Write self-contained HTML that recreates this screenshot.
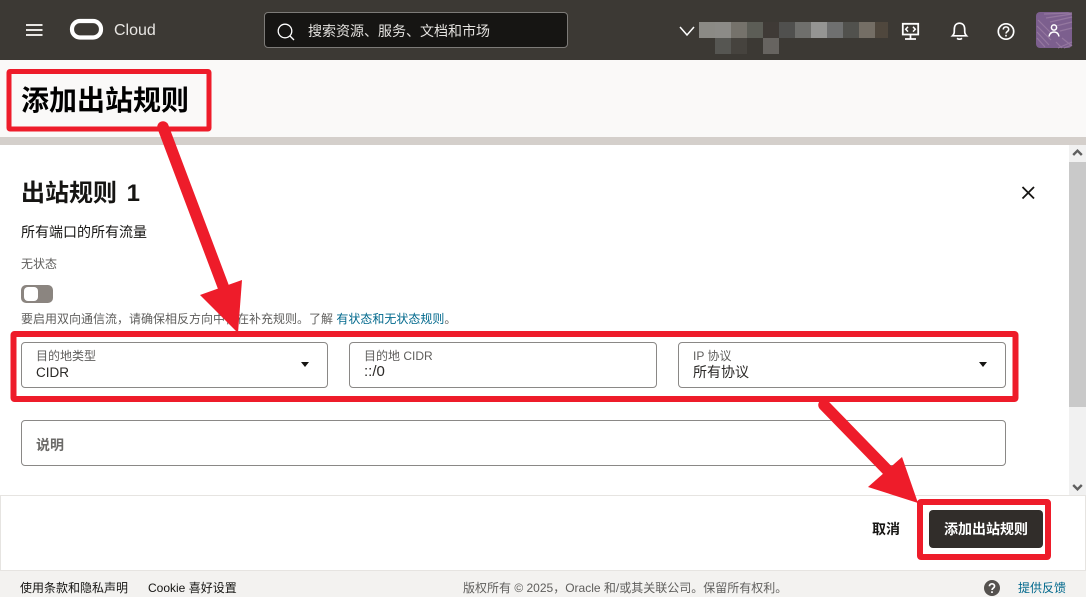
<!DOCTYPE html>
<html lang="zh"><head><meta charset="utf-8"><title>添加出站规则</title>
<style>
html,body{margin:0;padding:0;width:1086px;height:597px;overflow:hidden;background:#fff;font-family:"Liberation Sans","Noto Sans CJK SC",sans-serif;color:#161513}
div,span,a{position:absolute;white-space:nowrap}
.fld{background:#fff;border:1px solid #8a8886;border-radius:4px;box-sizing:border-box;height:46px}
.lb{font-size:12px;line-height:16px;color:#5f5e5c}
.val{font-size:14px;line-height:18px;color:#2b2927}
svg{position:absolute;overflow:visible}
</style></head><body>
<div style="left:0;top:0;width:1086px;height:60px;background:#3c3934"></div>
<div style="left:264px;top:12px;width:304px;height:36px;box-sizing:border-box;background:#161513;border:1px solid #7d7b78;border-radius:4px"></div>
<svg style="left:0;top:0" width="1086" height="60" fill="none" stroke="#fff">
<path d="M26 25h16.500M26 30h16.500M26 35h16.500" stroke="#e8e6e3" stroke-width="2"/>
<rect x="72" y="21" width="29" height="16.500" rx="8" stroke-width="4.200"/>
<circle cx="285" cy="31" r="6.800" stroke-width="1.300"/><path d="M290 36l4 4" stroke-width="1.300"/>
<path d="M680 27l7 8 7-8" stroke-width="1.500"/>
<path d="M902.800 23.800h15.400v10.700h-15.400z" stroke-width="1.800"/><path d="M910.500 34.500v4M905 39h11" stroke-width="1.700"/><path d="M908 26.800l-2.300 2.400 2.300 2.400M913 26.800l2.300 2.400-2.300 2.400" stroke-width="1.500"/>
<path d="M952.500 35.800c2-2 1.800-3.800 1.800-6.300 0-4 2-6.300 5.200-6.300s5.200 2.300 5.200 6.300c0 2.500-.2 4.300 1.800 6.300z" stroke-width="1.700"/><path d="M957 38.300c1.500 1.200 3.500 1.200 5 0" stroke-width="1.700"/>
<circle cx="1006" cy="31.500" r="7.700" stroke-width="1.700"/><path d="M1003.300 29.500c0-3.500 5.400-3.500 5.400 0 0 2-2.700 2-2.700 4" stroke-width="1.600"/><path d="M1006 34.800v1.700" stroke-width="1.600"/>
</svg>
<div style="left:114px;top:21px;font-size:16px;line-height:20px;color:#e8e6e3">Cloud</div>
<div style="left:308px;top:22px;font-size:14px;line-height:18px;color:#e4e2df">搜索资源、服务、文档和市场</div>
<svg style="left:699px;top:22px" width="190" height="32" shape-rendering="crispEdges">
<rect x="0" y="0" width="16" height="16" fill="#8b8a85"/><rect x="16" y="0" width="16" height="16" fill="#8c8b87"/><rect x="32" y="0" width="16" height="16" fill="#75726b"/><rect x="48" y="0" width="16" height="16" fill="#5c5d56"/><rect x="64" y="0" width="16" height="16" fill="#3f3a36"/><rect x="80" y="0" width="16" height="16" fill="#50504e"/><rect x="96" y="0" width="16" height="16" fill="#6f6f6c"/><rect x="112" y="0" width="16" height="16" fill="#959593"/><rect x="128" y="0" width="16" height="16" fill="#6f7070"/><rect x="144" y="0" width="16" height="16" fill="#51514d"/><rect x="160" y="0" width="16" height="16" fill="#746e65"/><rect x="176" y="0" width="13" height="16" fill="#4f473d"/>
<rect x="16" y="16" width="16" height="16" fill="#565652"/><rect x="32" y="16" width="16" height="16" fill="#46433e"/><rect x="64" y="16" width="16" height="16" fill="#676460"/>
</svg>
<svg style="left:1036px;top:12px" width="36" height="36" fill="none">
<rect width="36" height="36" rx="4" fill="#7c5f8e"/>
<path d="M8 2l28 -1M10 6l26-4M14 10l22-5M20 14l16-4M24 19l12-3M2 8l14 14M1 14l14 14M1 20l12 13M1 26l8 9M22 36l14-6M28 36l8-3M26 26l10 8M20 30l6 6" stroke="#94779f" stroke-width="1.200"/>
<circle cx="18" cy="15.500" r="2.600" stroke="#fff" stroke-width="1.500"/><path d="M13 24.500c.5-3 2.300-4.500 5-4.500s4.500 1.500 5 4.500" stroke="#fff" stroke-width="1.500"/>
</svg>

<div style="left:0;top:60px;width:1086px;height:77px;background:#faf9f8"></div>
<div style="left:0;top:137px;width:1086px;height:8px;background:#d4cfcb"></div>
<div style="left:21px;top:81px;font-size:28px;line-height:40px;font-weight:700;color:#000;letter-spacing:0">添加出站规则</div>

<div style="left:21px;top:176px;font-size:24px;line-height:36px;font-weight:700;word-spacing:3px">出站规则 1</div>
<svg style="left:1021px;top:185px" width="15" height="15" fill="none" stroke="#161513" stroke-width="1.800"><path d="M1.500 2l11.500 11.500M13 2L1.500 13.500"/></svg>
<div style="left:21px;top:222px;font-size:14px;line-height:20px">所有端口的所有流量</div>
<div style="left:21px;top:255px;font-size:12px;line-height:18px;color:#5f5e5c">无状态</div>
<div style="left:21px;top:285px;width:32px;height:18px;border-radius:5px;background:#8b8580"></div>
<div style="left:24px;top:287px;width:14px;height:14px;border-radius:4px;background:#fff"></div>
<div style="left:21px;top:310px;font-size:12px;line-height:18px;color:#5f5e5c">要启用双向通信流，请确保相反方向中存在补充规则。了解 <span style="position:static;color:#00688c">有状态和无状态规则</span>。</div>

<div class="fld" style="left:21px;top:342px;width:307px"></div>
<div class="lb" style="left:36px;top:348px">目的地类型</div><div class="val" style="left:36px;top:364px;font-size:13.500px">CIDR</div>
<svg style="left:300.500px;top:362px" width="8" height="5"><path d="M0 0h8L4 5z" fill="#161513"/></svg>
<div class="fld" style="left:349px;top:342px;width:308px"></div>
<div class="lb" style="left:364px;top:348px">目的地 CIDR</div><div class="val" style="left:364px;top:363px;font-size:15px">::/0</div>
<div class="fld" style="left:678px;top:342px;width:328px"></div>
<div class="lb" style="left:693px;top:348px">IP 协议</div><div class="val" style="left:693px;top:363px">所有协议</div>
<svg style="left:978.500px;top:362px" width="8" height="5"><path d="M0 0h8L4 5z" fill="#161513"/></svg>
<div class="fld" style="left:21px;top:420px;width:985px"></div>
<div style="left:36px;top:436px;font-size:14px;line-height:18px;font-weight:700;color:#6b6a68">说明</div>

<div style="left:1069px;top:145px;width:17px;height:350px;background:#f1f1f1"></div>
<div style="left:1069px;top:162px;width:17px;height:245px;background:#c9c9c9"></div>
<svg style="left:1069px;top:145px" width="17" height="350" fill="none" stroke="#5f5f5f" stroke-width="2.400"><path d="M4.200 10l4.300-4.300 4.300 4.300M4.200 340l4.300 4.300 4.300-4.300"/></svg>

<div style="left:0;top:495px;width:1086px;height:76px;box-sizing:border-box;background:#fff;border:1px solid #e6e4e1"></div>
<div style="left:872px;top:520px;font-size:14px;line-height:18px;font-weight:700">取消</div>
<div style="left:929px;top:510px;width:114px;height:38px;border-radius:4px;background:#312d2a"></div>
<div style="left:944px;top:520px;font-size:14px;line-height:18px;font-weight:700;color:#fff">添加出站规则</div>

<div style="left:0;top:571px;width:1086px;height:26px;background:#f3f2f0"></div>
<div style="left:20px;top:579px;font-size:12px;line-height:18px;color:#161513">使用条款和隐私声明</div>
<div style="left:148px;top:579px;font-size:12px;line-height:18px;color:#161513">Cookie 喜好设置</div>
<div style="left:463px;top:579px;font-size:12px;line-height:18px;color:#5f5e5c">版权所有 © 2025，Oracle 和/或其关联公司。保留所有权利。</div>
<svg style="left:984px;top:580px" width="16" height="16"><circle cx="8" cy="8" r="8" fill="#55524f"/><path d="M5.500 6.200c0-3.200 5-3.200 5 0 0 2-2.500 2-2.500 3.800M8 11.300v1.700" fill="none" stroke="#fff" stroke-width="1.700"/></svg>
<div style="left:1018px;top:579px;font-size:12px;line-height:18px;color:#00688c">提供反馈</div>

<svg style="left:0;top:0" width="1086" height="597" fill="none">
<rect x="9" y="71.500" width="200" height="57.500" rx="1" stroke="#ee1c2a" stroke-width="5"/>
<rect x="13.500" y="334" width="1002" height="65" rx="1" stroke="#ee1c2a" stroke-width="6"/>
<rect x="920" y="502" width="128" height="55" rx="1" stroke="#ee1c2a" stroke-width="6"/>
<path d="M163 127L223 286" stroke="#ee1c2a" stroke-width="11.500" stroke-linecap="round"/>
<path d="M200 295L242 280L238 333z" fill="#ee1c2a"/>
<path d="M824 405L893 476" stroke="#ee1c2a" stroke-width="11.500" stroke-linecap="round"/>
<path d="M868 487L902 457L918 503z" fill="#ee1c2a"/>
</svg>
</body></html>
